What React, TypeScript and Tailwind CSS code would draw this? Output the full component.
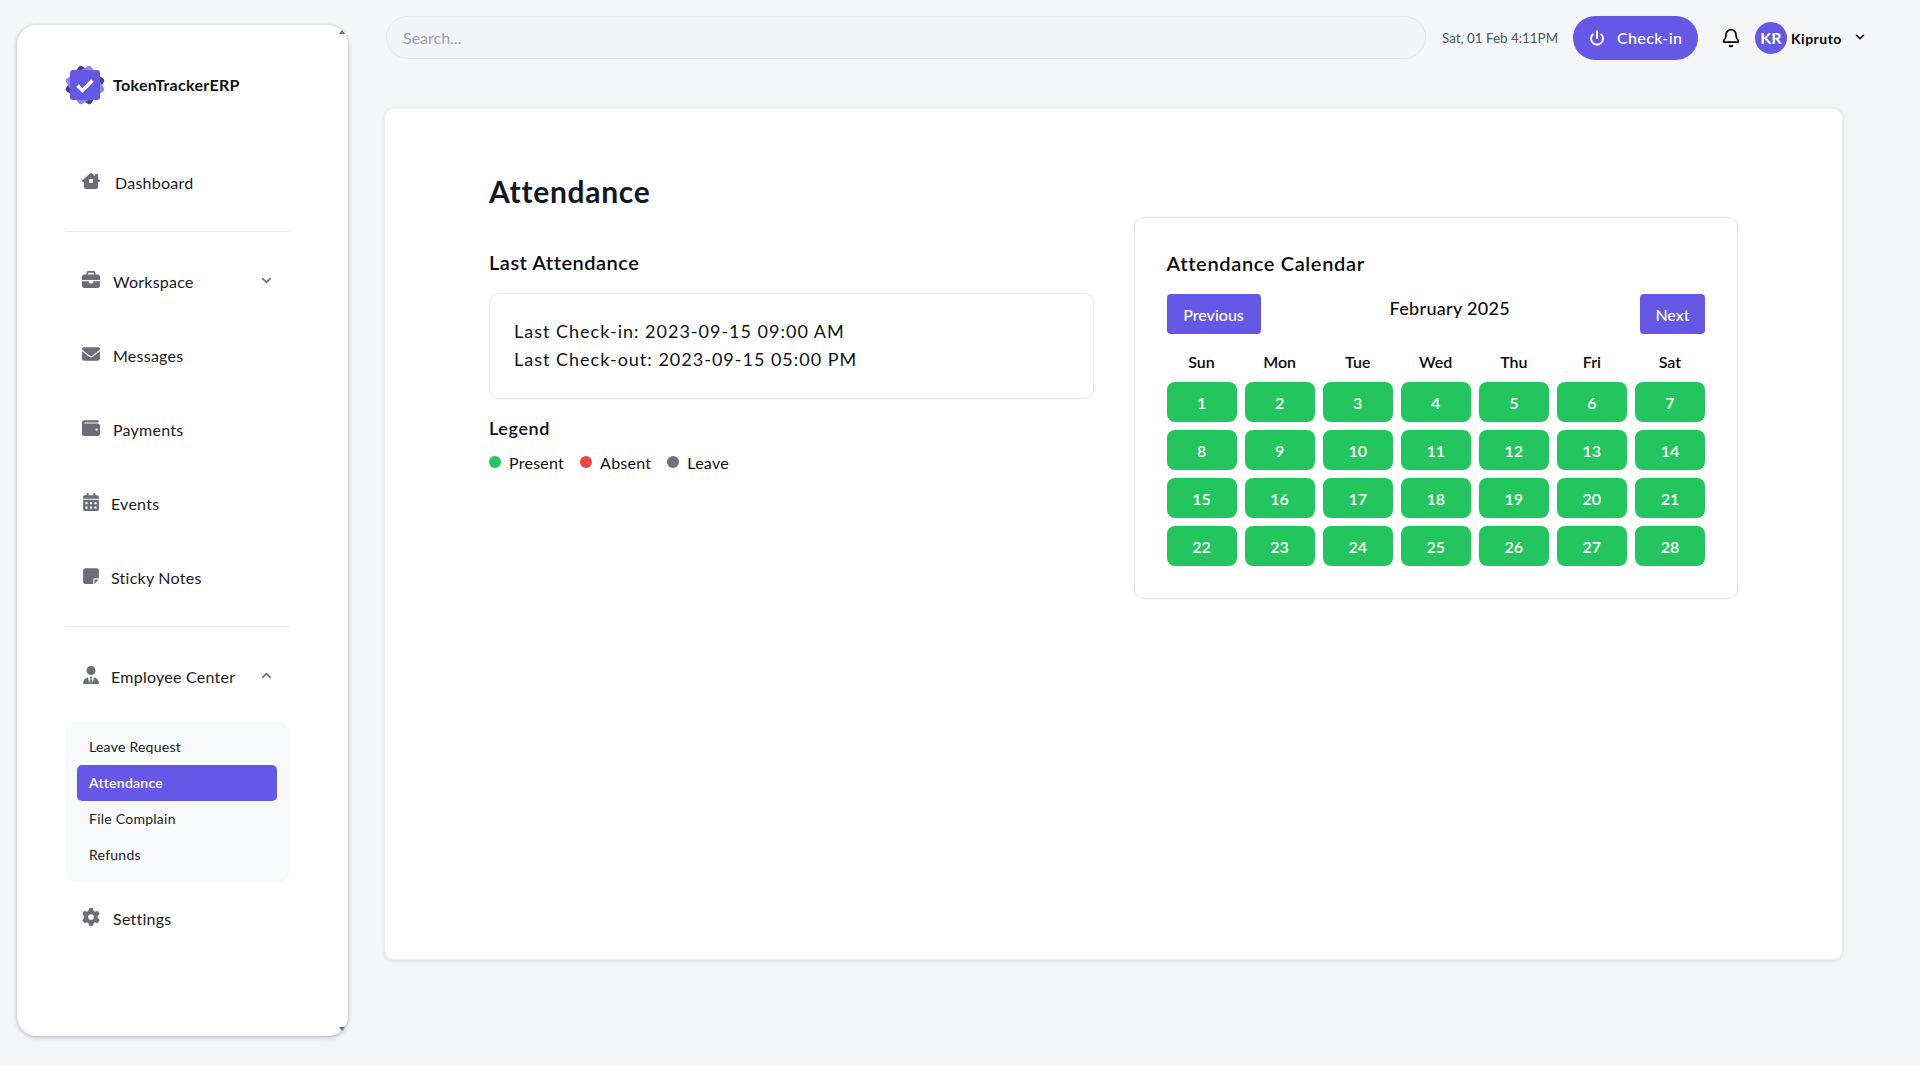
import React from "react";
import { FaHouseChimneyWindow, FaBriefcase, FaEnvelope, FaWallet, FaCalendarDays, FaNoteSticky, FaUserTie, FaGear } from "react-icons/fa6";
import { ChevronDown, ChevronUp, Bell, Power } from "lucide-react";

const Logo = () => (
  <svg viewBox="0 0 40 40" className="w-10 h-10 shrink-0">
    <rect x="5.2" y="5.2" width="29.6" height="29.6" rx="3" fill="#47408f" transform="rotate(30 20 20)" />
    <rect x="5.2" y="5.2" width="29.6" height="29.6" rx="3" fill="#8f87f0" transform="rotate(60 20 20)" />
    <rect x="5" y="5" width="30" height="30" rx="3" fill="#6558e6" />
    <path d="M12.5 20.5l5 5 10-10" fill="none" stroke="#fff" strokeWidth="3.6" />
  </svg>
);

const Nav = ({ icon, label, gap, size = "text-[18px]", chevron }: { icon: React.ReactNode; label: string; gap: string; size?: string; chevron?: "up" | "down" }) => (
  <div className="flex items-center pl-[17px] pr-[17px] h-[74px] text-[#1a1a1f] text-[16px] tracking-[0.25px]">
    <span className={`text-[#6b6d78] ${size} flex w-[18px] justify-start -mt-[4px] ${gap}`}>{icon}</span>
    <span className="flex-1">{label}</span>
    {chevron === "down" && <ChevronDown className="w-[15px] h-[15px] text-[#6b6d78] -mt-[3px] -mr-[2px]" strokeWidth={2.5} />}
    {chevron === "up" && <ChevronUp className="w-[15px] h-[15px] text-[#6b6d78] -mt-[3px] -mr-[2px]" strokeWidth={2.5} />}
  </div>
);

const Divider = () => <div className="h-px bg-[#e5e7eb]" />;

const days = ["Sun", "Mon", "Tue", "Wed", "Thu", "Fri", "Sat"];
const dates = Array.from({ length: 28 }, (_, i) => i + 1);

function Sidebar() {
  return (
    <aside className="relative mt-[25px] ml-[17px] w-[331px] h-[1011px] bg-white rounded-[20px] shadow-[0_1px_4px_rgba(70,80,110,0.45)] pl-12 pr-[59px] pt-10 shrink-0">
      <span className="absolute right-[3px] top-[5px] w-0 h-0 border-x-[3px] border-x-transparent border-b-[4px] border-b-[#6b6d78]" />
      <span className="absolute right-[3px] bottom-[5px] w-0 h-0 border-x-[3px] border-x-transparent border-t-[4px] border-t-[#6b6d78]" />
      <div className="flex items-center gap-2 h-10 text-[16px] font-bold text-[#111118] tracking-[0.3px]">
        <Logo />
        <span>TokenTrackerERP</span>
      </div>
      <div className="mt-[41px]">
        <Nav icon={<FaHouseChimneyWindow />} label="Dashboard" gap="mr-[15px]" size="text-[20px]" />
      </div>
      <div className="mt-[11px]"><Divider /></div>
      <div className="pt-[13px]">
        <Nav icon={<FaBriefcase />} label="Workspace" gap="mr-[13px]" chevron="down" />
        <Nav icon={<FaEnvelope />} label="Messages" gap="mr-[13px]" />
        <Nav icon={<FaWallet />} label="Payments" gap="mr-[13px]" />
        <Nav icon={<FaCalendarDays />} label="Events" gap="mr-[11px]" />
        <Nav icon={<FaNoteSticky />} label="Sticky Notes" gap="mr-[11px]" />
      </div>
      <div className="mt-[11px]"><Divider /></div>
      <div className="pt-[13px]">
        <Nav icon={<FaUserTie />} label="Employee Center" gap="mr-[11px]" chevron="up" />
      </div>
      <div className="mt-[8px] bg-[#f8f9fb] rounded-[10px] p-3 text-[14px] text-[#1a1a1f] tracking-[0.25px]">
        <div className="h-9 flex items-center pl-3 pb-[2px] -mt-[5px]">Leave Request</div>
        <div className="h-9 flex items-center pl-3 pb-[2px] bg-[#6558e6] text-white rounded-[5px] font-semibold">Attendance</div>
        <div className="h-9 flex items-center pl-3 pb-[2px]">File Complain</div>
        <div className="h-9 flex items-center pl-3 pb-[2px] -mb-[3px]">Refunds</div>
      </div>
      <div>
        <Nav icon={<FaGear />} label="Settings" gap="mr-[13px]" />
      </div>
    </aside>
  );
}

function Topbar() {
  return (
    <header className="flex items-center h-[44px] mt-4 ml-[38px]">
      <input
        placeholder="Search..."
        readOnly
        className="w-[1040px] h-[43px] -mt-[1px] rounded-full bg-[#f3f4f6] border border-[#e5e7eb] px-4 text-[16px] placeholder:text-[#9ca3af] outline-none"
      />
      <span className="ml-4 text-[13.4px] text-[#4b5563] w-[115px] whitespace-nowrap">Sat, 01 Feb 4:11PM</span>
      <button className="ml-[16px] w-[125px] h-[44px] rounded-full bg-[#6558e6] text-white text-[16px] font-medium tracking-[0.35px] flex items-center pl-4">
        <Power className="w-[16px] h-[16px] mr-[12px]" strokeWidth={3} />
        Check-in
      </button>
      <Bell className="ml-[23px] w-[20px] h-[20px] text-black" strokeWidth={2} />
      <div className="ml-[14px] w-8 h-8 rounded-full bg-[#6558e6] text-white font-bold text-[16px] flex items-center justify-center">KR</div>
      <span className="ml-[4px] text-[14px] font-bold text-black tracking-[0.5px]">Kipruto</span>
      <ChevronDown className="ml-[11px] w-[14px] h-[14px] text-black -mt-[2px]" strokeWidth={2.5} />
    </header>
  );
}

function Main() {
  return (
    <main className="ml-[36px] mt-[48px] w-[1459px] h-[852px] bg-white rounded-[10px] border border-[#eceef1] shadow-[0_1px_4px_rgba(0,0,0,0.12)] pl-[104px] pr-[104px] pt-[60px]">
      <h1 className="text-[30px] leading-[44px] font-bold text-[#111827] tracking-[0.7px]">Attendance</h1>
      <div className="grid grid-cols-2 gap-10 -mt-[1px]">
        <section className="pt-[36px]">
          <h2 className="text-[20px] leading-[28px] font-semibold text-[#0b0b10] tracking-[0.5px]">Last Attendance</h2>
          <div className="mt-[17px] h-[106px] rounded-[10px] border border-[#e5e7eb] px-6 pb-[3px] flex flex-col justify-center text-[18px] leading-[28px] tracking-[1px] text-[#111118]">
            <p>Last Check-in: 2023-09-15 09:00 AM</p>
            <p>Last Check-out: 2023-09-15 05:00 PM</p>
          </div>
          <h3 className="mt-[15px] text-[18px] leading-[28px] font-semibold text-[#0b0b10] tracking-[0.6px]">Legend</h3>
          <div className="mt-[9px] flex items-center text-[16px] leading-6 text-[#111118] tracking-[0.25px]">
            <span className="w-3 h-3 rounded-full bg-[#22c55e] mr-[8px] -mt-[2px]" />
            <span className="mr-[16px]">Present</span>
            <span className="w-3 h-3 rounded-full bg-[#ef4444] mr-[8px] -mt-[2px]" />
            <span className="mr-[16px]">Absent</span>
            <span className="w-3 h-3 rounded-full bg-[#6b7280] mr-[8px] -mt-[2px]" />
            <span>Leave</span>
          </div>
        </section>
        <section className="h-[382px] mt-[5px] rounded-[10px] border border-[#e5e7eb] p-8 pt-[31px]">
          <h2 className="text-[20px] leading-[28px] font-semibold text-[#0b0b10] tracking-[0.65px]">Attendance Calendar</h2>
          <div className="mt-[17px] flex items-start justify-between">
            <button className="w-[94px] h-10 rounded-[4px] bg-[#6558e6] text-white text-[16px] font-medium pt-[1px]">Previous</button>
            <span className="-ml-[1px] mt-[2px] text-[18px] leading-6 font-medium text-[#0b0b10] tracking-[0.3px]">February 2025</span>
            <button className="w-[65px] h-10 rounded-[4px] bg-[#6558e6] text-white text-[16px] font-medium pt-[1px]">Next</button>
          </div>
          <div className="mt-[16px] grid grid-cols-7 gap-x-2 gap-y-2">
            {days.map((d) => (
              <div key={d} className="h-6 leading-6 text-center text-[16px] font-semibold text-[#0b0b10]">{d}</div>
            ))}
            {dates.map((d) => (
              <div key={d} className="h-10 rounded-[8px] bg-[#22c55e] text-white text-[16px] font-semibold flex items-center justify-center pt-[1px]">{d}</div>
            ))}
          </div>
        </section>
      </div>
    </main>
  );
}

export default function App() {
  return (
    <div className="w-[1920px] h-[1065px] overflow-hidden bg-[#f5f6f8] flex font-['Lato','Noto_Sans',sans-serif]">
      <Sidebar />
      <div className="flex-1 min-w-0">
        <Topbar />
        <Main />
      </div>
    </div>
  );
}
